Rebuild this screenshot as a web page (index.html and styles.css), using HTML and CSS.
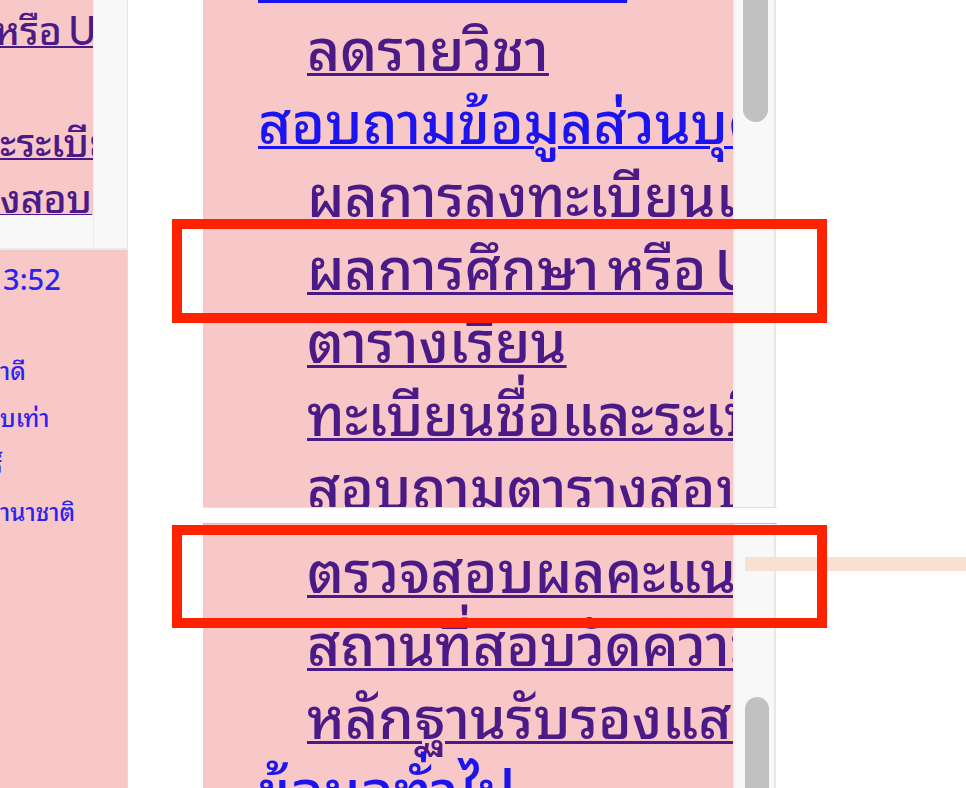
FILE: index.html
```html
<!DOCTYPE html>
<html lang="th">
<head>
<meta charset="utf-8">
<title>เมนู</title>
<link rel="stylesheet" href="styles.css">
</head>
<body>
<div class="stage">
  <div class="left">
    <div class="lframe">
      <div class="lview">
        <ul class="lmenu">
          <li class="tight"><a href="#">หรือ Unofficial</a></li>
          <li class="blank"></li>
          <li><a href="#">ะระเบียน</a></li>
          <li><a href="#">งสอบ</a></li>
        </ul>
      </div>
      <div class="lvs"></div>
      <div class="lhs"></div>
    </div>
    <div class="llower">
      <p class="clock">3:52</p>
      <p class="info">าดี</p>
      <p class="info">บเท่า</p>
      <p class="info shift">ร์</p>
      <p class="info">านาชาติ</p>
    </div>
  </div>
  <div class="mid">
    <div class="mframe mtop">
      <div class="mview">
        <ul class="menu menu-top">
          <li class="hd"><a href="#">ลงทะเบียนเรียน</a></li>
          <li class="sub"><a href="#" class="v">ลดรายวิชา</a></li>
          <li class="hd"><a href="#">สอบถามข้อมูลส่วนบุคคล</a></li>
          <li class="sub"><a href="#" class="v">ผลการลงทะเบียนเรียน</a></li>
          <li class="sub tight"><a href="#" class="v">ผลการศึกษา หรือ Unofficial Transcript</a></li>
          <li class="sub"><a href="#" class="v">ตารางเรียน</a></li>
          <li class="sub"><a href="#" class="v">ทะเบียนชื่อและระเบียนประวัติ</a></li>
          <li class="sub"><a href="#" class="v">สอบถามตารางสอบ</a></li>
        </ul>
      </div>
      <div class="vs"><div class="thumb thumb-top"></div></div>
    </div>
    <div class="mgap"></div>
    <div class="mframe mbottom">
      <div class="mview">
        <ul class="menu menu-bottom">
          <li class="sub"><a href="#" class="v">ตรวจสอบผลคะแนนสอบ</a></li>
          <li class="sub"><a href="#" class="v">สถานที่สอบวัดความรู้</a></li>
          <li class="sub"><a href="#" class="v">หลักฐานรับรองแสดงผล</a></li>
          <li class="hd"><a href="#">ข้อมูลทั่วไป</a></li>
        </ul>
      </div>
      <div class="vs"><div class="thumb thumb-bot"></div></div>
    </div>
  </div>
</div>
<div class="peach"></div>
<div class="mark mark-1"></div>
<div class="mark mark-2"></div>
</body>
</html>
```
FILE: styles.css
```css
html, body {
  margin: 0;
  padding: 0;
}
body {
  width: 966px;
  height: 788px;
  overflow: hidden;
  position: relative;
  background: #ffffff;
  font-family: "Noto Sans Thai Looped", "Noto Sans Thai", Tahoma, sans-serif;
}
.stage {
  display: flex;
  height: 788px;
}

/* left column */
.left {
  width: 128px;
  display: flex;
  flex-direction: column;
}
.lframe {
  height: 248px;
  display: grid;
  grid-template-columns: 93px 34px;
  grid-template-rows: 215px 33px;
  border-right: 1px solid #e4e4e4;
  border-bottom: 2px solid #ebebeb;
  background: #f8f8f8;
}
.lview {
  background: #f8c8c8;
  overflow: hidden;
}
.lvs {
  grid-row: 1 / 3;
  grid-column: 2;
  background: #f8f8f8;
  border-left: 1px solid #ececec;
}
.lhs {
  background: #f8f8f8;
}
.lmenu {
  list-style: none;
  margin: 0;
  padding: 0;
  font-size: 39px;
  font-weight: 500;
  line-height: 56px;
  white-space: nowrap;
}
.lmenu li { height: 56px; }
.lmenu a {
  color: #4a1a86;
  text-decoration-thickness: 2px;
}
.lmenu .tight {
  word-spacing: -4px;
  margin-left: -6px;
}
.llower {
  flex: 1;
  background: #f8c8c8;
  border-right: 1px solid #f3d3d3;
  padding-top: 7px;
  overflow: hidden;
}
.llower p {
  margin: 0;
  color: #2b24ee;
  white-space: nowrap;
  font-weight: 500;
}
.clock {
  font-size: 29px;
  line-height: 40px;
  padding-left: 3px;
  margin-bottom: 49px !important;
}
.info {
  font-size: 24px;
  line-height: 47px;
}
.shift { margin-left: -9px !important; }

/* middle column */
.mid {
  margin-left: 75px;
  width: 574px;
  display: flex;
  flex-direction: column;
}
.mframe {
  display: flex;
}
.mtop {
  height: 507px;
  border-bottom: 1px solid #e2e2e2;
}
.mgap {
  height: 15px;
}
.mbottom {
  flex: 1;
  min-height: 0;
  border-top: 1px solid #d8b8b8;
}
.mview {
  width: 530px;
  background: #f8c8c8;
  overflow: hidden;
}
.vs {
  width: 41px;
  background: #f8f8f8;
  border-right: 2px solid #e8e8e8;
  box-shadow: inset 3px 0 3px -2px rgba(0, 0, 0, 0.08);
  display: flex;
  flex-direction: column;
  overflow: hidden;
}
.thumb {
  width: 25px;
  margin-left: 10px;
  background: #c1c1c1;
  flex: none;
}
.thumb-top {
  height: 122px;
  border-radius: 0 0 13px 13px;
}
.thumb-bot {
  margin-top: 173px;
  height: 140px;
  margin-left: 12px;
  width: 24px;
  border-radius: 13px 13px 0 0;
}

.menu {
  list-style: none;
  margin: 0;
  padding: 0;
  font-size: 57px;
  font-weight: 500;
  line-height: 73px;
  white-space: nowrap;
}
.menu li { height: 73px; }
.menu-top { margin-top: -64px; }
.menu-bottom { margin-top: 7px; }
.menu a {
  text-decoration: underline;
  text-decoration-thickness: 3px;
}
.menu .tight { word-spacing: -7px; }
.hd { padding-left: 55px; }
.hd a { color: #1c14ee; }
.sub { padding-left: 104px; }
.sub a { color: #4a1a86; }

/* annotations */
.peach {
  position: absolute;
  left: 745px;
  top: 557px;
  width: 221px;
  height: 14px;
  background: #f9e1d1;
}
.mark {
  position: absolute;
  left: 172px;
  width: 655px;
  box-sizing: border-box;
  border: 10px solid #ff2200;
}
.mark-1 { top: 219px; height: 104px; }
.mark-2 { top: 525px; height: 103px; }
```
